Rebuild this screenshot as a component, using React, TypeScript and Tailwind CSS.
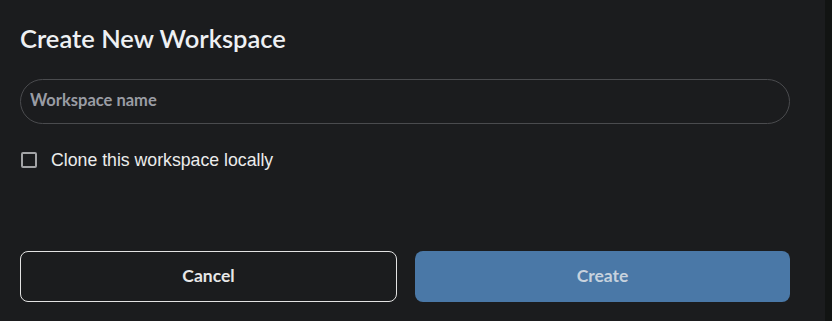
import React from "react";

export default function App() {
  return (
    <div className="flex h-[321px] w-[832px] bg-[#1b1c1e]">
      <div className="flex w-[825px] flex-col px-5 pt-[22px]">
        {/* Title */}
        <h1 className="font-['Lato',sans-serif] text-[25.5px] font-semibold leading-8 text-[#eef0f3]">
          Create New Workspace
        </h1>

        {/* Name input */}
        <input
          type="text"
          placeholder="Workspace name"
          className="mt-[25px] h-[45px] w-[770px] rounded-full border border-[#4a4b4e] bg-transparent px-[9px] pb-[3px] font-['Lato',sans-serif] text-[16.5px] font-bold text-[#e6e6e6] outline-none placeholder:text-[#9a9ca4]"
        />

        {/* Checkbox */}
        <label className="mt-[22px] flex h-7 items-center gap-[14px]">
          <span className="ml-px h-4 w-4 rounded-[2px] border-2 border-[#a3a4a6]" />
          <span className="font-['Liberation_Sans',Arial,sans-serif] text-[17.7px] text-[#ececec]">
            Clone this workspace locally
          </span>
        </label>

        {/* Actions */}
        <div className="mt-[77px] flex gap-[18px]">
          <button className="h-[51px] w-[377px] rounded-lg border border-[#e3e3e3] font-['Lato',sans-serif] text-[17.5px] font-bold text-[#e8e8e8]">
            Cancel
          </button>
          <button className="h-[51px] w-[375px] rounded-lg bg-[#4a78a7] font-['Lato',sans-serif] text-[17.5px] font-bold text-[#c7d2de]">
            Create
          </button>
        </div>
      </div>
      <div className="flex-1 bg-[#121413]" />
    </div>
  );
}
